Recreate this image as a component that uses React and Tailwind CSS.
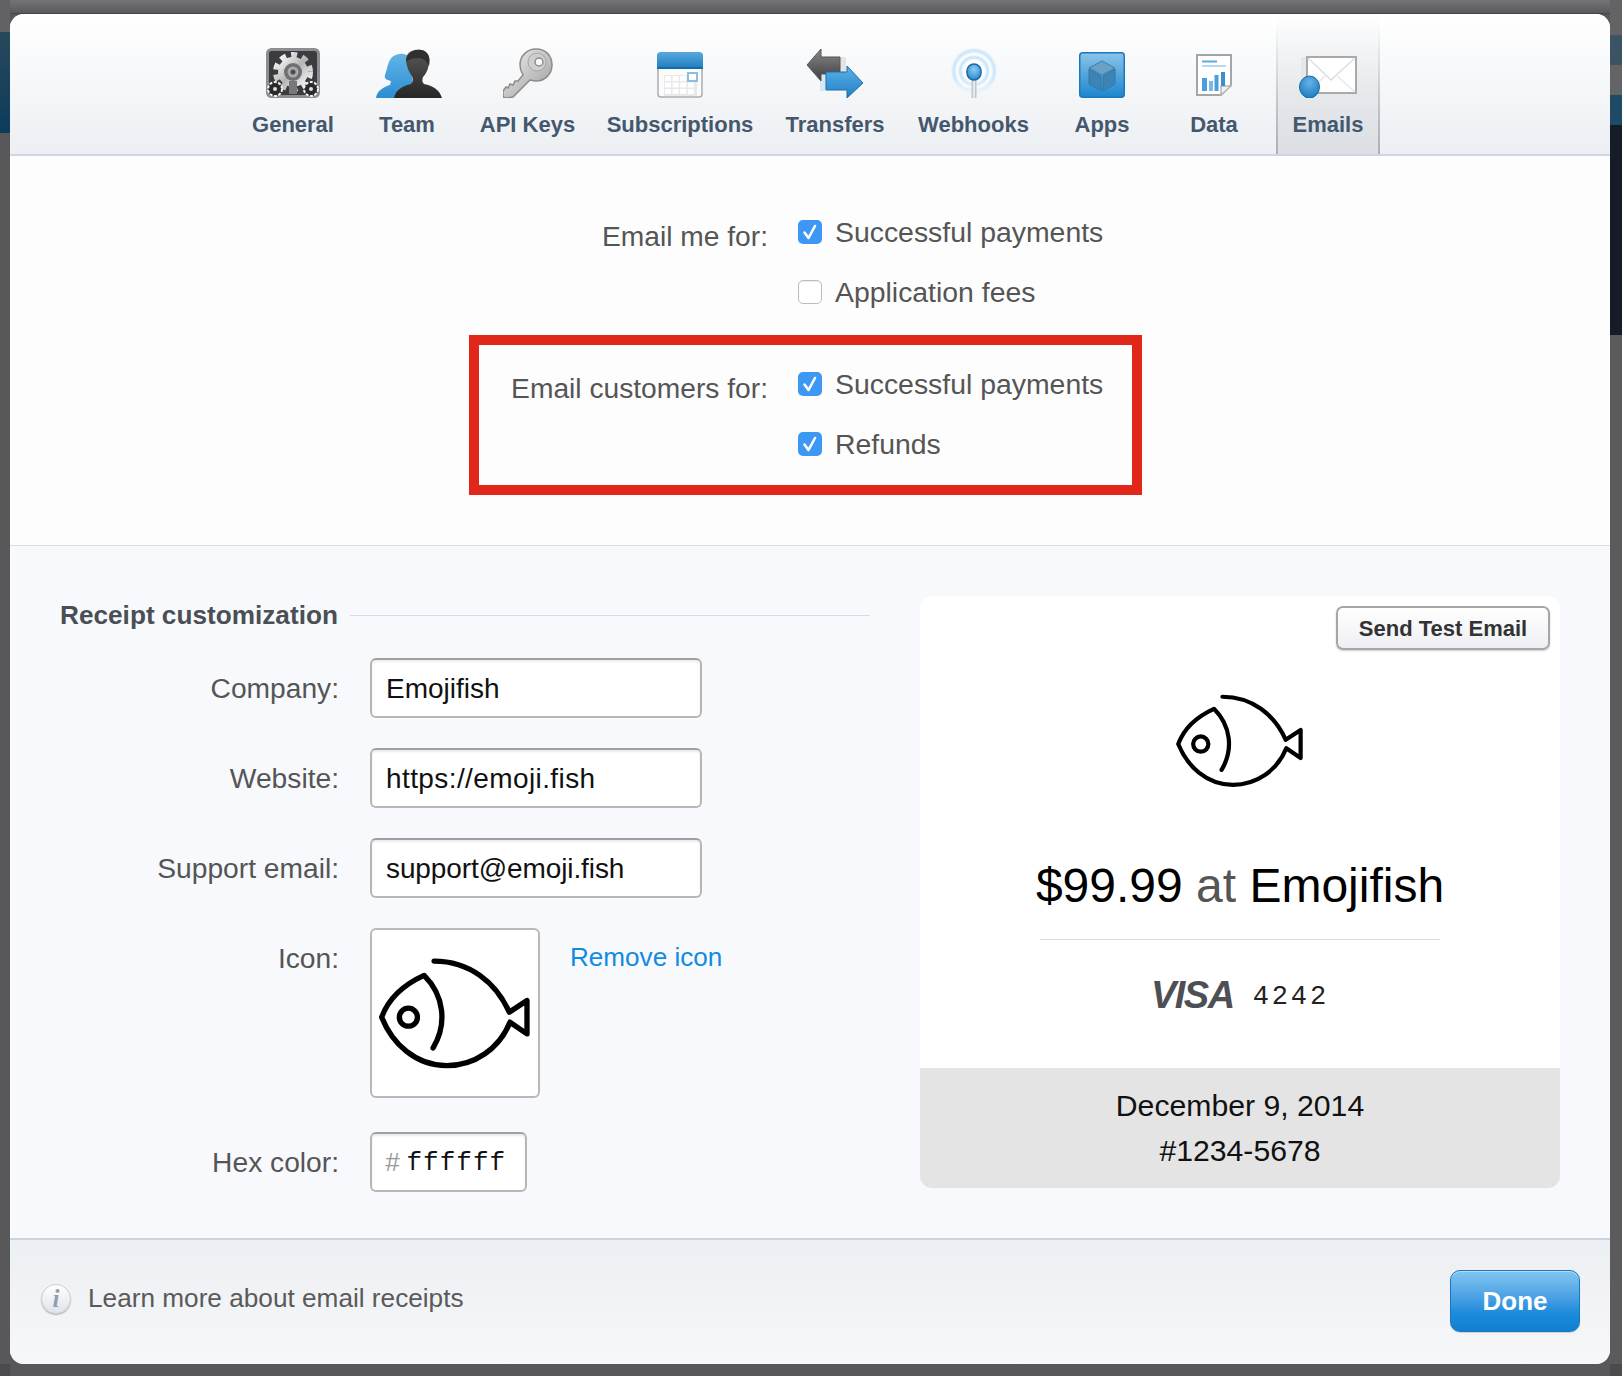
import React from 'react';

const sans = 'font-["Liberation_Sans",Arial,sans-serif]';
const mono = 'font-["Liberation_Mono","Courier_New",monospace]';

function GeneralIcon() {
  return (
    <svg width="54" height="50" viewBox="0 0 54 50">
      <defs>
        <linearGradient id="gearFill" x1="0" y1="0" x2="1" y2="1">
          <stop offset="0" stopColor="#ffffff" />
          <stop offset="0.5" stopColor="#b4b4b4" />
          <stop offset="1" stopColor="#ffffff" />
        </linearGradient>
      </defs>
      <rect x="1.5" y="1.5" width="51" height="47" rx="4" fill="#3c3c3e" stroke="#8b8e93" strokeWidth="3" />
      <circle cx="27" cy="24" r="17" fill="none" stroke="url(#gearFill)" strokeWidth="6" strokeDasharray="6 5.1" />
      <circle cx="27" cy="24" r="15" fill="url(#gearFill)" />
      <circle cx="27" cy="24" r="9" fill="#6f6f71" />
      <circle cx="27" cy="24" r="5.5" fill="#a9a9ab" />
      <circle cx="27" cy="24" r="2.5" fill="#4c4c4e" />
      <rect x="23" y="33" width="8" height="13" fill="#77777a" />
      <circle cx="9" cy="41" r="7" fill="#2a2a2c" stroke="#f2f2f2" strokeWidth="2" strokeDasharray="3 1.5" />
      <circle cx="9" cy="41" r="2" fill="#e0e0e0" />
      <circle cx="45" cy="41" r="7" fill="#2a2a2c" stroke="#f2f2f2" strokeWidth="2" strokeDasharray="3 1.5" />
      <circle cx="45" cy="41" r="2" fill="#e0e0e0" />
    </svg>
  );
}

function TeamIcon() {
  return (
    <svg width="66" height="50" viewBox="0 0 66 50">
      <defs>
        <linearGradient id="womanFill" x1="0" y1="0" x2="0" y2="1">
          <stop offset="0" stopColor="#62b4e6" />
          <stop offset="1" stopColor="#2a8ed2" />
        </linearGradient>
        <linearGradient id="manFill" x1="0" y1="0" x2="0" y2="1">
          <stop offset="0" stopColor="#585858" />
          <stop offset="1" stopColor="#262627" />
        </linearGradient>
      </defs>
      <path d="M0 50 C1 43 7 39 14 37 L15 33 C10 32 8 30 9 27 C12 21 11 7 24 6 C30 5 35 9 36 16 L36 50 Z" fill="url(#womanFill)" />
      <path d="M18 50 C20 41 27 38 35 36 C37 34 37 31 36 28 C33 24 30 18 30 10 C32 2 40 1 45 2 C52 3 54 9 53 15 C52 22 50 26 47 29 C46 32 46 34 48 36 C57 38 63 41 66 50 Z" fill="url(#manFill)" />
      <path d="M30 14 C31 3 40 1 45 2 C52 3 55 9 53 18 C50 12 47 10 42 10 C37 10 33 11 30 14 Z" fill="#2f2f30" />
    </svg>
  );
}

function KeyIcon() {
  return (
    <svg width="50" height="50" viewBox="0 0 50 50">
      <defs>
        <linearGradient id="keyFill" x1="0" y1="0" x2="1" y2="1">
          <stop offset="0" stopColor="#f2f2f2" />
          <stop offset="1" stopColor="#9a9a9a" />
        </linearGradient>
      </defs>
      <path
        d="M33 1 C43 1 49 8 49 17 C49 26 42 33 33 33 C31 33 29 32.5 27 32 L10 49 L3 50 C1 50 0 49 0 47 L0 43 L3 39 L5 40 L7 36 L10 37 L12 33 L15 33 L20 27 C18 24 17 21 17 17 C17 8 24 1 33 1 Z"
        fill="url(#keyFill)"
        stroke="#8c8c8c"
        strokeWidth="1.5"
      />
      <circle cx="34" cy="14" r="9" fill="#cfcfcf" stroke="#a5a5a5" />
      <circle cx="36" cy="14" r="4" fill="#f7f8fa" stroke="#8c8c8c" strokeWidth="1.5" />
    </svg>
  );
}

function CalendarIcon() {
  const cells = [];
  for (let r = 0; r < 3; r++) {
    for (let c = 0; c < 4; c++) {
      cells.push(<rect key={`${r}-${c}`} x={8 + c * 7.6} y={24 + r * 6.5} width="6" height="5" fill="#ffffff" />);
    }
  }
  return (
    <svg width="46" height="46" viewBox="0 0 46 46">
      <defs>
        <linearGradient id="calTop" x1="0" y1="0" x2="0" y2="1">
          <stop offset="0" stopColor="#5aa8dc" />
          <stop offset="1" stopColor="#1f7fc0" />
        </linearGradient>
      </defs>
      <rect x="1" y="1" width="44" height="44" rx="3" fill="#fbfbfc" stroke="#a9adb2" strokeWidth="1.5" />
      <path d="M0 16 L0 4 Q0 0 4 0 L42 0 Q46 0 46 4 L46 16 Z" fill="url(#calTop)" />
      <rect x="0" y="15" width="46" height="2" fill="#116ba8" />
      <rect x="7" y="23" width="33" height="21" fill="#e8e9eb" />
      {cells}
      <rect x="31" y="21" width="9" height="8" fill="#ffffff" stroke="#90bddb" strokeWidth="2" />
    </svg>
  );
}

function TransfersIcon() {
  return (
    <svg width="56" height="50" viewBox="0 0 56 50">
      <defs>
        <linearGradient id="arrowDark" x1="0" y1="0" x2="0" y2="1">
          <stop offset="0" stopColor="#8a8a8a" />
          <stop offset="1" stopColor="#3d3d3d" />
        </linearGradient>
        <linearGradient id="arrowBlue" x1="0" y1="0" x2="0" y2="1">
          <stop offset="0" stopColor="#5eb0e6" />
          <stop offset="1" stopColor="#1f80c8" />
        </linearGradient>
      </defs>
      <rect x="33" y="9" width="6" height="21" fill="#e4e4e4" />
      <rect x="14" y="30" width="6" height="20" fill="#d5e7f5" transform="translate(-1 -7)" />
      <path d="M0 17 L14 1 L14 9 L33 9 L33 26 L14 26 L14 33 Z" fill="url(#arrowDark)" stroke="#555" />
      <path d="M56 35 L40 50 L40 42 L19 42 L19 24 L40 24 L40 18 Z" fill="url(#arrowBlue)" stroke="#1a6fae" />
    </svg>
  );
}

function WebhooksIcon() {
  return (
    <svg width="46" height="50" viewBox="0 0 46 50">
      <defs>
        <radialGradient id="waves" cx="0.5" cy="0.5" r="0.5">
          <stop offset="0.45" stopColor="#ffffff" stopOpacity="0.9" />
          <stop offset="0.6" stopColor="#c3e2f8" />
          <stop offset="0.72" stopColor="#ffffff" />
          <stop offset="0.88" stopColor="#cbe5f9" />
          <stop offset="1" stopColor="#edf6fc" />
        </radialGradient>
        <linearGradient id="waveFade" x1="0" y1="0" x2="0" y2="1">
          <stop offset="0.6" stopColor="#fff" />
          <stop offset="0.95" stopColor="#000" />
        </linearGradient>
        <mask id="waveMask">
          <rect width="46" height="50" fill="url(#waveFade)" />
        </mask>
        <radialGradient id="pinFill" cx="0.5" cy="0.35" r="0.7">
          <stop offset="0" stopColor="#8fcdf2" />
          <stop offset="1" stopColor="#2184c8" />
        </radialGradient>
      </defs>
      <circle cx="23" cy="23" r="23" fill="url(#waves)" mask="url(#waveMask)" />
      <rect x="20.5" y="28" width="5" height="22" fill="#c3c5c8" />
      <rect x="22.4" y="28" width="1.2" height="22" fill="#fff" />
      <rect x="16" y="16" width="14" height="16" rx="7" fill="url(#pinFill)" stroke="#156aa9" strokeWidth="1.5" />
    </svg>
  );
}

function AppsIcon() {
  return (
    <svg width="46" height="46" viewBox="0 0 46 46">
      <defs>
        <linearGradient id="appsFill" x1="0" y1="0" x2="0" y2="1">
          <stop offset="0" stopColor="#8ac4ea" />
          <stop offset="1" stopColor="#1d86cd" />
        </linearGradient>
      </defs>
      <rect x="0.75" y="0.75" width="44.5" height="44.5" rx="3" fill="url(#appsFill)" stroke="#1a78bc" strokeWidth="1.5" />
      <path d="M23 9 L36 16 L23 23 L10 16 Z" fill="#6aa0c4" stroke="#3f80ad" />
      <path d="M10 17 L22 24 L22 39 L10 32 Z" fill="#3d84b4" stroke="#2f79ab" />
      <path d="M36 17 L24 24 L24 39 L36 32 Z" fill="#3d84b4" stroke="#2f79ab" />
    </svg>
  );
}

function DataIcon() {
  return (
    <svg width="36" height="42" viewBox="0 0 36 42">
      <path d="M1 1 L35 1 L35 31 L25 41 L1 41 Z" fill="#ffffff" stroke="#a3a5a8" strokeWidth="2" />
      <path d="M25 41 L25 32 L35 32 Z" fill="#f0f0f0" stroke="#b5b5b5" strokeWidth="1.5" />
      <rect x="6" y="6.5" width="15" height="2" fill="#5eaadf" />
      <rect x="6" y="11" width="24" height="2" fill="#b7d8ef" />
      <rect x="6" y="24" width="5" height="13" fill="#4b9ed8" />
      <rect x="13" y="27" width="4" height="10" fill="#7bb9e4" />
      <rect x="18.5" y="21" width="4" height="16" fill="#4b9ed8" />
      <rect x="25" y="18" width="4" height="14" fill="#3a8fcc" />
    </svg>
  );
}

function EmailsIcon() {
  return (
    <svg width="58" height="42" viewBox="0 0 58 42">
      <defs>
        <radialGradient id="dotFill" cx="0.5" cy="0.3" r="0.75">
          <stop offset="0" stopColor="#65b3e6" />
          <stop offset="1" stopColor="#1a78bd" />
        </radialGradient>
      </defs>
      <rect x="2" y="1" width="6" height="32" fill="#e6e7ea" />
      <rect x="8" y="1" width="49" height="36" fill="#ffffff" stroke="#a8a9ab" strokeWidth="2" />
      <path d="M9 2 L32 24 L56 2" fill="none" stroke="#dcdde0" strokeWidth="1.5" />
      <path d="M9 36 L27 19 M56 36 L37 19" fill="none" stroke="#e6e7e9" strokeWidth="1.5" />
      <ellipse cx="10.5" cy="31" rx="10" ry="11" fill="url(#dotFill)" stroke="#156aa9" />
    </svg>
  );
}

function FishIcon({ width, height, strokeWidth }) {
  return (
    <svg width={width} height={height} viewBox="60 110 455 335">
      <path
        d="M225 122 C330 122 410 185 450 275 L503 240 L503 340 L452 305 C420 385 345 435 262 435 C170 435 100 370 68 290 C90 230 140 190 195 165 C255 225 265 310 222 382"
        fill="none"
        stroke="#000"
        strokeWidth={strokeWidth}
        strokeLinecap="round"
        strokeLinejoin="round"
      />
      <circle cx="148" cy="290" r="27" fill="none" stroke="#000" strokeWidth={strokeWidth} />
    </svg>
  );
}

function InfoIcon() {
  return (
    <div className="flex h-[30px] w-[30px] items-center justify-center rounded-full border border-[#c9ced3] bg-linear-to-b from-white to-[#dfe4e8] shadow-[0_1px_1px_rgba(0,0,0,0.3)]">
      <span className='font-["Liberation_Serif",serif] text-[25px] leading-none font-bold text-[#8ba0b0] italic'>i</span>
    </div>
  );
}

const tabs = [
  { label: 'General', width: 'w-[114px]', icon: <GeneralIcon />, box: 'h-[50px] mt-[34px]' },
  { label: 'Team', width: 'w-[114px]', icon: <TeamIcon />, box: 'h-[50px] mt-[34px] ml-[3px]' },
  { label: 'API Keys', width: 'w-[127px]', icon: <KeyIcon />, box: 'h-[50px] mt-[34px]' },
  { label: 'Subscriptions', width: 'w-[178px]', icon: <CalendarIcon />, box: 'h-[50px] mt-[34px] pt-[4px]' },
  { label: 'Transfers', width: 'w-[132px]', icon: <TransfersIcon />, box: 'h-[50px] mt-[34px]' },
  { label: 'Webhooks', width: 'w-[145px]', icon: <WebhooksIcon />, box: 'h-[50px] mt-[34px]' },
  { label: 'Apps', width: 'w-[112px]', icon: <AppsIcon />, box: 'h-[50px] mt-[34px] pt-[4px]' },
  { label: 'Data', width: 'w-[112px]', icon: <DataIcon />, box: 'h-[50px] mt-[34px] pt-[6px]' },
  { label: 'Emails', width: 'w-[104px] ml-[6px]', icon: <EmailsIcon />, box: 'h-[50px] mt-[34px] pt-[8px]', active: true },
];

function Tab({ tab }) {
  return (
    <div
      className={`flex h-[140px] flex-col items-center ${tab.width} ${
        tab.active
          ? 'border-x-2 border-transparent bg-linear-to-b from-transparent to-[#dcdfe3] [border-image:linear-gradient(to_bottom,transparent_10%,#aab0b7)_1]'
          : ''
      }`}
    >
      <div className={`flex items-start justify-center ${tab.box}`}>{tab.icon}</div>
      <span className="mt-[14px] text-[22px] leading-[26px] font-bold text-[#44586d]">{tab.label}</span>
    </div>
  );
}

function Checkbox({ checked }) {
  if (!checked) {
    return <span className="block h-[24px] w-[24px] rounded-[5px] border border-[#bdbdbd] bg-white shadow-[inset_0_1px_1px_rgba(0,0,0,0.08)]" />;
  }
  return (
    <span className="block h-[24px] w-[24px] rounded-[5px] bg-[#3d97f5]">
      <svg width="24" height="24" viewBox="0 0 24 24">
        <path d="M6.5 12.5 L10.5 18 L17 6" fill="none" stroke="#fff" strokeWidth="2.6" strokeLinecap="round" strokeLinejoin="round" />
      </svg>
    </span>
  );
}

function EmailGroup({ label, options }) {
  return (
    <div className="flex">
      <div className="mt-[-1px] w-[289px] pt-[1px] text-right text-[28.2px] leading-[32px] text-[#555]">{label}</div>
      <div className="ml-[30px] flex flex-col gap-[36px]">
        {options.map((o) => (
          <div key={o.text} className="flex h-[24px] items-center gap-[13px]">
            <Checkbox checked={o.checked} />
            <span className="text-[28.4px] leading-[24px] text-[#555]">{o.text}</span>
          </div>
        ))}
      </div>
    </div>
  );
}

function Field({ label, value, spacing = '' }) {
  return (
    <div className="flex">
      <label className="w-[279px] text-right text-[28.2px] leading-[60px] text-[#555]">{label}</label>
      <input
        readOnly
        value={value}
        className={`ml-[31px] h-[60px] w-[332px] rounded-[6px] border-2 border-[#b7b7b7] border-t-[#a0a0a0] bg-white px-[14px] pt-[2px] text-[28px] text-[#111] shadow-[inset_0_2px_2px_rgba(0,0,0,0.08)] outline-none ${spacing}`}
      />
    </div>
  );
}

export default function App() {
  return (
    <div className={`flex h-[1376px] w-[1622px] overflow-hidden bg-[#58585a] ${sans}`}>
      <div className="flex w-[10px] flex-col bg-[#5a5a5c]">
        <div className="h-[32px] bg-[#626264]" />
        <div className="h-[101px] bg-linear-to-b from-[#27495c] to-[#0c3b5b]" />
        <div className="flex-1 bg-[#58585a]" />
        <div className="h-[12px] bg-[#4b4b4d]" />
      </div>

      <div className="flex w-[1600px] flex-col">
        <div className="h-[14px] border-b border-[#444] bg-linear-to-b from-[#747476] to-[#5a5a5c]" />
        <div className="flex h-[1350px] flex-col overflow-hidden rounded-[14px] bg-white">
          <div className="flex h-[142px] border-b-2 border-[#cfd6de] bg-linear-to-b from-white to-[#eceff3] pl-[226px]">
            {tabs.map((tab) => (
              <Tab key={tab.label} tab={tab} />
            ))}
          </div>

          <div className="border-b border-[#dadde2] bg-[#fdfdfe] pt-[64px] pb-[50px] pl-[459px]">
            <div className="mb-[31px] ml-[10px]">
              <EmailGroup
                label="Email me for:"
                options={[
                  { text: 'Successful payments', checked: true },
                  { text: 'Application fees', checked: false },
                ]}
              />
            </div>
            <div className="w-[673px] border-[10px] border-[#e1261a] pt-[27px] pb-[29px]">
              <EmailGroup
                label="Email customers for:"
                options={[
                  { text: 'Successful payments', checked: true },
                  { text: 'Refunds', checked: true },
                ]}
              />
            </div>
          </div>

          <div className="flex flex-1 gap-[50px] bg-[#f8f9fd] px-[50px] pt-[50px]">
            <div className="w-[810px]">
              <div className="flex h-[38px] items-center gap-[12px]">
                <span className="pt-[2px] text-[26.2px] font-bold text-[#4a4f55]">Receipt customization</span>
                <div className="h-px flex-1 bg-[#d8dce2]" />
              </div>
              <div className="mt-[24px] flex flex-col gap-[30px]">
                <Field label="Company:" value="Emojifish" />
                <Field label="Website:" value="https://emoji.fish" spacing="tracking-[0.4px]" />
                <Field label="Support email:" value="support@emoji.fish" spacing="tracking-[-0.1px]" />
                <div className="flex">
                  <label className="w-[279px] text-right text-[28.2px] leading-[60px] text-[#555]">Icon:</label>
                  <div className="ml-[31px] flex h-[170px] w-[170px] items-center justify-center rounded-[6px] border-2 border-[#b9b9b9] bg-white">
                    <FishIcon width={152} height={112} strokeWidth={16} />
                  </div>
                  <a className="ml-[30px] text-[26.1px] leading-[59px] text-[#0f8ce0]">Remove icon</a>
                </div>
                <div className="mt-[4px] flex">
                  <label className="w-[279px] text-right text-[28.2px] leading-[60px] text-[#555]">Hex color:</label>
                  <div className="ml-[31px] flex h-[60px] w-[157px] items-center rounded-[6px] border-2 border-[#b7b7b7] border-t-[#a0a0a0] bg-white pl-[13px] shadow-[inset_0_2px_2px_rgba(0,0,0,0.08)]">
                    <span className="text-[26px] text-[#999] italic">#</span>
                    <span className={`${mono} ml-[7px] pt-[3px] text-[26px] tracking-[1px] text-[#111]`}>ffffff</span>
                  </div>
                </div>
              </div>
            </div>

            <div className="flex h-[592px] w-[640px] flex-col overflow-hidden rounded-[12px] bg-white">
              <div className="flex flex-1 flex-col items-center">
                <div className="flex w-full justify-end pt-[10px] pr-[10px]">
                  <button className="h-[44px] w-[214px] rounded-[7px] border-2 border-[#a6a6a6] bg-linear-to-b from-white to-[#eeeff3] text-[22px] font-bold text-[#333] shadow-[0_1px_2px_rgba(0,0,0,0.2)]">
                    Send Test Email
                  </button>
                </div>
                <div className="mt-[43px]">
                  <FishIcon width={128} height={95} strokeWidth={15} />
                </div>
                <div className="mt-[63px] text-[48px] leading-[70px] text-black">
                  $99.99 <span className="text-[#555]">at</span> Emojifish
                </div>
                <div className="mt-[18px] h-px w-[400px] bg-[#dedede]" />
                <div className="mt-[33px] flex items-center gap-[19px]">
                  <span className="text-[38px] leading-[40px] font-bold tracking-[-1.5px] text-[#4d4f53] italic">VISA</span>
                  <span className={`${mono} pt-[4px] text-[27px] tracking-[2.9px] text-[#222]`}>4242</span>
                </div>
              </div>
              <div className="flex h-[120px] flex-col items-center justify-center bg-[#e4e4e4] text-[30.2px] leading-[45px] text-[#111]">
                <span>December 9, 2014</span>
                <span>#1234-5678</span>
              </div>
            </div>
          </div>

          <div className="flex h-[126px] items-center justify-between border-t-2 border-[#ccd4dc] bg-linear-to-b from-[#eceff3] to-[#f6f7f9] pr-[30px] pl-[31px]">
            <div className="mb-[6px] flex items-center gap-[17px]">
              <InfoIcon />
              <span className="text-[26.2px] text-[#5a5a5a]">Learn more about email receipts</span>
            </div>
            <button className="mb-[2px] h-[62px] w-[130px] rounded-[10px] border border-[#1678bd] bg-linear-to-b from-[#82c5f0] via-[#1b8bdb] via-70% to-[#1180d0] text-[26px] font-bold text-white shadow-[inset_0_1px_0_rgba(255,255,255,0.4),0_1px_1px_rgba(0,0,0,0.15)]">
              Done
            </button>
          </div>
        </div>
      </div>

      <div className="flex w-[12px] flex-col">
        <div className="h-[35px] bg-[#636365]" />
        <div className="h-[30px] bg-[#3c5364]" />
        <div className="h-[30px] bg-[#626466]" />
        <div className="h-[30px] bg-[#1f4a66]" />
        <div className="h-[210px] bg-[#151c26]" />
        <div className="flex-1 bg-[#5b5b5d]" />
        <div className="h-[12px] bg-[#4b4b4d]" />
      </div>
    </div>
  );
}
